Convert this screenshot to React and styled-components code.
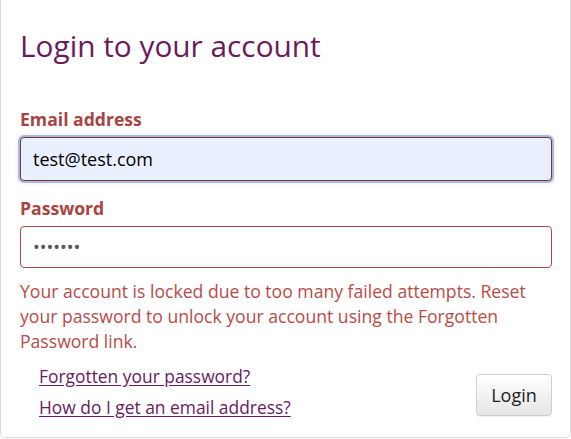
import React from 'react'
import styled, { createGlobalStyle } from 'styled-components'

const Global = createGlobalStyle`
  body {
    margin: 0;
    background: #fff;
    font-family: "Open Sans", "Noto Sans", sans-serif;
  }
`

const Card = styled.div`
  box-sizing: border-box;
  width: 571px;
  height: 438px;
  border: 1px solid #dcdcdc;
  border-top: none;
  border-radius: 0 0 5px 5px;
  padding: 28px 18px 0 19px;
`

const Title = styled.h1`
  margin: 0 0 43px;
  font-size: 29.8px;
  font-weight: 400;
  line-height: 36px;
  color: #6b1a5c;
`

const Label = styled.label`
  display: block;
  font-size: 17.6px;
  font-weight: 700;
  line-height: 24px;
  color: #a94442;
  margin-bottom: 6px;
`

const Input = styled.input`
  box-sizing: border-box;
  display: block;
  width: 100%;
  height: ${p => (p.focused ? '44px' : '42px')};
  padding: 0 12px;
  font-family: inherit;
  font-size: 18px;
  color: ${p => (p.focused ? '#000' : '#555')};
  background: ${p => (p.focused ? '#e8f0fe' : '#fff')};
  border: 1px solid ${p => (p.focused ? '#8a2e2e' : '#b04a4a')};
  border-radius: 4px;
  outline: none;
  box-shadow: ${p => (p.focused ? '0 0 0 2px #9fbde6, 0 0 6px rgba(169,68,66,0.25)' : 'none')};
  margin-bottom: ${p => p.gap || 0}px;
`

const Error = styled.p`
  margin: 11px 0 0;
  font-size: 17.6px;
  line-height: 25px;
  color: #b94a48;
`

const Footer = styled.div`
  display: flex;
  justify-content: space-between;
  align-items: center;
  margin-top: 7px;
`

const Links = styled.ul`
  list-style: none;
  margin: 0;
  padding: 0 0 0 19px;
`

const Item = styled.li`
  line-height: 30px;
`

const Link = styled.a`
  font-size: 17.4px;
  color: #6b1a5c;
  text-decoration: underline;
  text-underline-offset: 2px;
`

const Button = styled.button`
  box-sizing: border-box;
  width: 76px;
  height: 42px;
  margin-top: 5px;
  font-family: inherit;
  font-size: 18px;
  color: #222;
  background: linear-gradient(#ffffff, #e6e6e6);
  border: 1px solid #cfcfcf;
  border-radius: 4px;
  box-shadow: 0 1px 1px rgba(0,0,0,0.06);
`

export default function App() {
  return (
    <>
      <Global />
      <Card>
        <Title>Login to your account</Title>
        <Label htmlFor="email">Email address</Label>
        <Input id="email" focused defaultValue="test@test.com" gap={15} />
        <Label htmlFor="pw">Password</Label>
        <Input id="pw" type="password" defaultValue="1234567" />
        <Error>
          Your account is locked due to too many failed attempts. Reset your password to unlock your account using the Forgotten Password link.
        </Error>
        <Footer>
          <Links>
            <Item><Link href="#">Forgotten your password?</Link></Item>
            <Item><Link href="#">How do I get an email address?</Link></Item>
          </Links>
          <Button>Login</Button>
        </Footer>
      </Card>
    </>
  )
}
